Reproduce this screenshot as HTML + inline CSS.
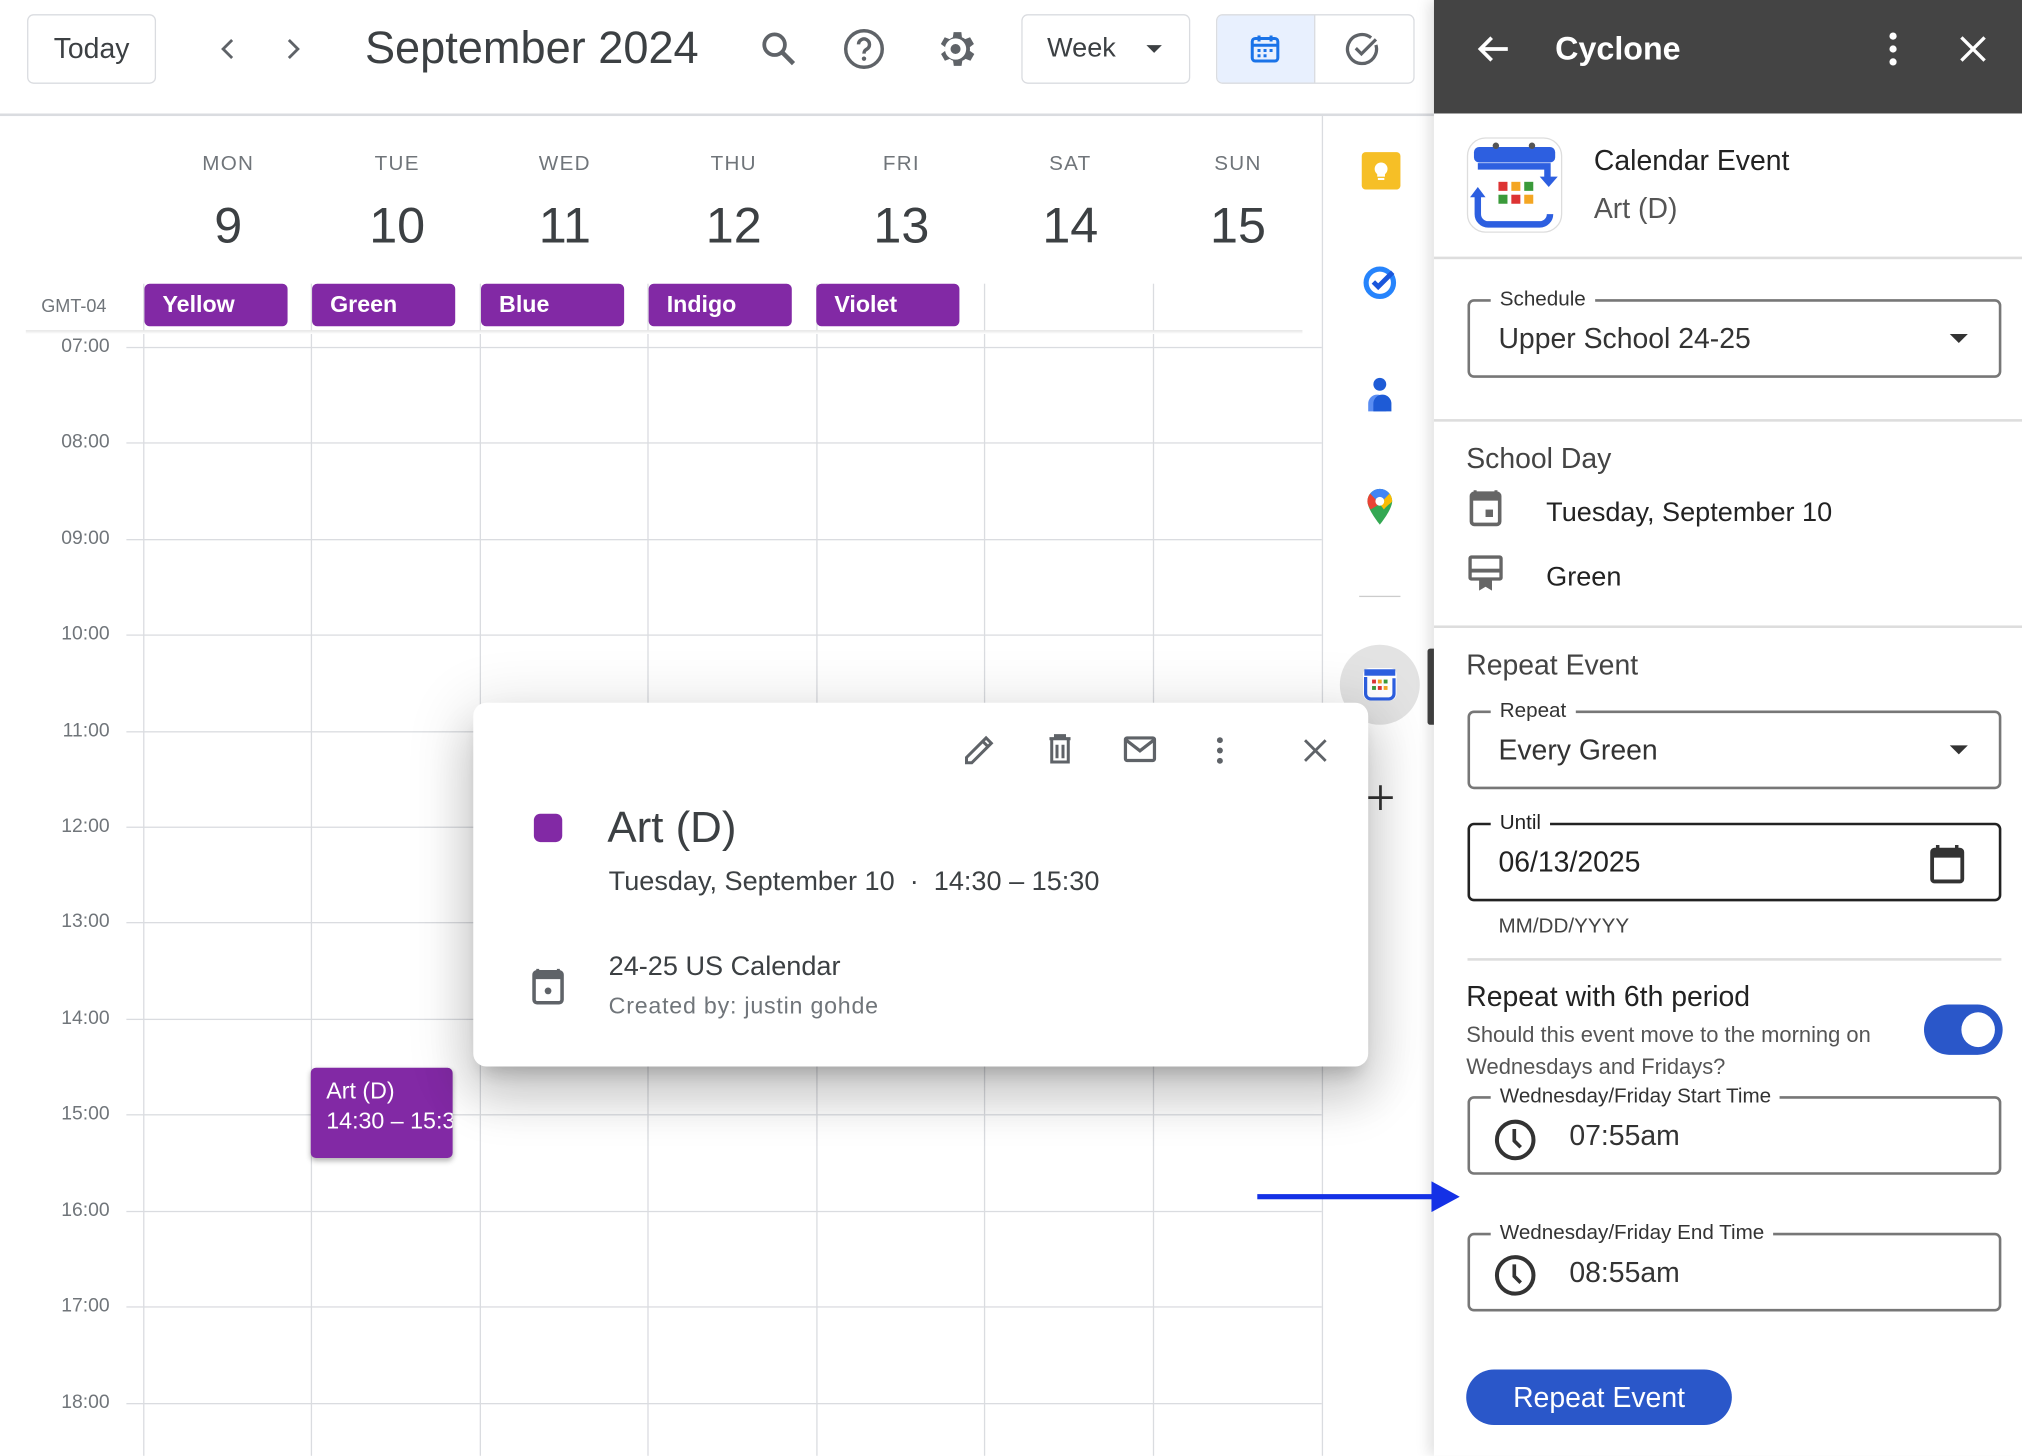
<!DOCTYPE html>
<html><head><meta charset="utf-8">
<style>
*{margin:0;padding:0;box-sizing:border-box}
html,body{width:2022px;height:1456px;overflow:hidden;background:#fff}
#w{position:absolute;left:0;top:0;width:1568px;height:1129px;transform:scale(1.28954);transform-origin:0 0;font-family:"Liberation Sans",Arial,sans-serif;color:#3c4043;overflow:hidden}
.a{position:absolute}
.t{position:absolute;white-space:nowrap}
.hl{position:absolute;left:98px;width:927px;height:1px;background:#dadce0}
.vl{position:absolute;top:220px;width:1px;height:909px;background:#dadce0}
.hr{position:absolute;right:1483px;font-size:15px;color:#70757a;height:20px;line-height:20px;text-align:right;width:70px}
.dn{position:absolute;top:119px;width:100px;text-align:center;font-size:16px;letter-spacing:1px;color:#70757a}
.dd{position:absolute;top:154px;width:100px;text-align:center;font-size:39px;color:#3c4043}
.chip{position:absolute;top:220px;height:33px;width:111px;background:#8229a5;border-radius:4px;color:#fff;font-weight:bold;font-size:18px;line-height:33px;padding-left:14px}
.fld{position:absolute;left:1138px;width:414px;height:61px;border:2px solid #777;border-radius:5px}
.lbl{position:absolute;top:-11px;left:16px;background:#fff;padding:0 7px;font-size:16px;color:#333;line-height:20px}
.val{position:absolute;left:22px;top:16px;font-size:22px;color:#333;line-height:26px}
.div{position:absolute;left:1112px;width:456px;height:2px;background:#ddd}
</style></head><body><div id="w">

<div class="a" style="left:0;top:88px;width:1112px;height:2px;background:#dadce0"></div>
<div class="a" style="left:21px;top:11px;width:100px;height:54px;border:1.5px solid #dadce0;border-radius:5px;font-size:22px;line-height:51px;text-align:center;color:#3c4043">Today</div>
<svg class="a" style="left:165px;top:26px" width="24" height="24" viewBox="0 0 24 24"><path d="M15 5l-7 7 7 7" fill="none" stroke="#5f6368" stroke-width="2.2"/></svg>
<svg class="a" style="left:215px;top:26px" width="24" height="24" viewBox="0 0 24 24"><path d="M9 5l7 7-7 7" fill="none" stroke="#5f6368" stroke-width="2.2"/></svg>
<div class="t" style="left:283px;top:16px;font-size:35px;line-height:44px;color:#3c4043">September 2024</div>
<svg class="a" style="left:588px;top:22px" width="32" height="32" viewBox="0 0 24 24"><circle cx="9.5" cy="9.5" r="6" fill="none" stroke="#5f6368" stroke-width="2.2"/><path d="M14 14l6.5 6.5" stroke="#5f6368" stroke-width="2.6"/></svg>
<svg class="a" style="left:653px;top:21px" width="34" height="34" viewBox="0 0 24 24"><circle cx="12" cy="12" r="10" fill="none" stroke="#5f6368" stroke-width="1.9"/><path d="M9 9.5a3 3 0 1 1 4.5 2.6c-1 .6-1.5 1.1-1.5 2.4" fill="none" stroke="#5f6368" stroke-width="1.9"/><circle cx="12" cy="17.3" r="1.2" fill="#5f6368"/></svg>
<svg class="a" style="left:723px;top:20px" width="36" height="36" viewBox="0 0 24 24"><path fill="#5f6368" d="M19.4 13a7.5 7.5 0 0 0 0-2l2.1-1.6-2-3.5-2.5 1a7 7 0 0 0-1.7-1L15 3.3h-4l-.4 2.6a7 7 0 0 0-1.7 1l-2.5-1-2 3.5L6.6 11a7.5 7.5 0 0 0 0 2l-2.1 1.6 2 3.5 2.5-1a7 7 0 0 0 1.7 1l.4 2.6h4l.4-2.6a7 7 0 0 0 1.7-1l2.5 1 2-3.5zM12 17.5a5.5 5.5 0 1 1 0-11 5.5 5.5 0 0 1 0 11z"/><circle cx="12" cy="12" r="2.6" fill="#5f6368"/></svg>
<div class="a" style="left:792px;top:11px;width:131px;height:54px;border:1.5px solid #dadce0;border-radius:5px"></div>
<div class="t" style="left:812px;top:25px;font-size:21px;line-height:26px">Week</div>
<div class="a" style="left:889px;top:35px;width:0;height:0;border-left:6px solid transparent;border-right:6px solid transparent;border-top:6px solid #3c4043"></div>
<div class="a" style="left:943px;top:11px;width:154px;height:54px;border:1.5px solid #dadce0;border-radius:5px;overflow:hidden"><div class="a" style="left:0;top:0;width:76px;height:54px;background:#e8f0fe;border-right:1.5px solid #dadce0"></div></div>
<svg class="a" style="left:967px;top:24px" width="28" height="28" viewBox="0 0 24 24"><rect x="3.5" y="5" width="17" height="15" rx="2" fill="none" stroke="#1a73e8" stroke-width="2"/><path d="M3.5 9.5h17M8 3v4M16 3v4" stroke="#1a73e8" stroke-width="2"/><g fill="#1a73e8"><rect x="7" y="12" width="2" height="2"/><rect x="11" y="12" width="2" height="2"/><rect x="15" y="12" width="2" height="2"/><rect x="7" y="15.5" width="2" height="2"/><rect x="11" y="15.5" width="2" height="2"/></g></svg>
<svg class="a" style="left:1042px;top:23px" width="30" height="30" viewBox="0 0 24 24"><path d="M20 9.5A9 9 0 1 1 17 5" fill="none" stroke="#5f6368" stroke-width="2"/><path d="M7.5 11.5l3.5 3.5 9-9" fill="none" stroke="#5f6368" stroke-width="2"/></svg>

<div class="dn" style="left:127px">MON</div><div class="dd" style="left:127px">9</div>
<div class="dn" style="left:258px">TUE</div><div class="dd" style="left:258px">10</div>
<div class="dn" style="left:388px">WED</div><div class="dd" style="left:388px">11</div>
<div class="dn" style="left:519px">THU</div><div class="dd" style="left:519px">12</div>
<div class="dn" style="left:649px">FRI</div><div class="dd" style="left:649px">13</div>
<div class="dn" style="left:780px">SAT</div><div class="dd" style="left:780px">14</div>
<div class="dn" style="left:910px">SUN</div><div class="dd" style="left:910px">15</div>

<div class="vl" style="left:111px"></div><div class="vl" style="left:241px"></div><div class="vl" style="left:372px"></div><div class="vl" style="left:502px"></div><div class="vl" style="left:633px"></div><div class="vl" style="left:763px"></div><div class="vl" style="left:894px"></div>
<div class="a" style="left:1025px;top:89px;width:1px;height:1040px;background:#dadce0"></div>
<div class="a" style="left:20px;top:256px;width:990px;height:3px;background:linear-gradient(#e5e5e5,#fff)"></div>
<div class="t" style="left:32px;top:228px;font-size:14px;color:#70757a;line-height:18px">GMT-04</div>
<div class="chip" style="left:112px">Yellow</div>
<div class="chip" style="left:242px">Green</div>
<div class="chip" style="left:373px">Blue</div>
<div class="chip" style="left:503px">Indigo</div>
<div class="chip" style="left:633px">Violet</div>

<div class="hl" style="top:269px"></div><div class="hr" style="top:259px">07:00</div>
<div class="hl" style="top:343px"></div><div class="hr" style="top:333px">08:00</div>
<div class="hl" style="top:418px"></div><div class="hr" style="top:408px">09:00</div>
<div class="hl" style="top:492px"></div><div class="hr" style="top:482px">10:00</div>
<div class="hl" style="top:567px"></div><div class="hr" style="top:557px">11:00</div>
<div class="hl" style="top:641px"></div><div class="hr" style="top:631px">12:00</div>
<div class="hl" style="top:715px"></div><div class="hr" style="top:705px">13:00</div>
<div class="hl" style="top:790px"></div><div class="hr" style="top:780px">14:00</div>
<div class="hl" style="top:864px"></div><div class="hr" style="top:854px">15:00</div>
<div class="hl" style="top:939px"></div><div class="hr" style="top:929px">16:00</div>
<div class="hl" style="top:1013px"></div><div class="hr" style="top:1003px">17:00</div>
<div class="hl" style="top:1088px"></div><div class="hr" style="top:1078px">18:00</div>

<div class="a" style="left:241px;top:828px;width:110px;height:70px;background:#8229a5;border-radius:4px;color:#fff;font-size:18px;line-height:23px;padding:7px 0 0 12px;overflow:hidden;white-space:nowrap;box-shadow:0 2px 4px rgba(0,0,0,.3)">Art (D)<br>14:30 – 15:30</div>

<div class="a" style="left:1056px;top:118px;width:30px;height:29px;background:#f6bf26;border-radius:3px"></div>
<svg class="a" style="left:1059px;top:121px" width="24" height="24" viewBox="0 0 24 24"><circle cx="12" cy="10" r="5" fill="#fff"/><rect x="9" y="13" width="6" height="3" fill="#fff"/><rect x="9.5" y="17" width="5" height="1.6" fill="#fff"/></svg>
<svg class="a" style="left:1055px;top:203px" width="30" height="30" viewBox="0 0 24 24"><circle cx="12" cy="13" r="8.5" fill="none" stroke="#2684fc" stroke-width="3.2"/><path d="M8 12.5l3 3 9-9" fill="none" stroke="#1a56db" stroke-width="3"/></svg>
<svg class="a" style="left:1057px;top:291px" width="26" height="30" viewBox="0 0 26 30"><circle cx="13" cy="7" r="5" fill="#1e5bd6"/><path d="M4 28v-6a7 7 0 0 1 14 0v6z" fill="#5a8df2"/><path d="M8 28v-6a7 7 0 0 1 14 0v6z" fill="#1e5bd6"/></svg>
<svg class="a" style="left:1057px;top:377px" width="26" height="32" viewBox="0 0 24 30"><path d="M12 2a9 9 0 0 0-9 9c0 6 9 17 9 17s9-11 9-17a9 9 0 0 0-9-9z" fill="#34a853"/><path d="M12 2a9 9 0 0 0-7 3.4l7 8 7-8A9 9 0 0 0 12 2z" fill="#4285f4"/><path d="M5 5.4A9 9 0 0 0 3 11c0 2 1 4 2.3 6l6.7-4z" fill="#ea4335"/><path d="M19 5.4l-7 7.6 3 4c2-3 6-5 6-6a9 9 0 0 0-2-5.6z" fill="#fbbc04"/><circle cx="12" cy="11" r="3.2" fill="#fff"/></svg>
<div class="a" style="left:1054px;top:462px;width:32px;height:1px;background:#ccc"></div>
<div class="a" style="left:1039px;top:500px;width:62px;height:62px;border-radius:50%;background:#e3e3e3"></div>
<svg class="a" style="left:1055px;top:515px" width="30" height="30" viewBox="0 0 30 30"><rect x="2" y="3" width="26" height="25" rx="5" fill="#fff"/><rect x="3" y="4" width="24" height="5" fill="#2d5fe0"/><path d="M4 10v13a4 4 0 0 0 4 4h14a4 4 0 0 0 4-4V11" fill="none" stroke="#2d5fe0" stroke-width="2.5"/><g><rect x="9" y="12" width="3" height="3" fill="#d33"/><rect x="13.5" y="12" width="3" height="3" fill="#f4a623"/><rect x="18" y="12" width="3" height="3" fill="#3a9a3a"/><rect x="9" y="17" width="3" height="3" fill="#3a9a3a"/><rect x="13.5" y="17" width="3" height="3" fill="#d33"/><rect x="18" y="17" width="3" height="3" fill="#f4a623"/></g></svg>
<div class="a" style="left:1107px;top:503px;width:5px;height:59px;background:#444;border-radius:2px 0 0 2px"></div>
<svg class="a" style="left:1059px;top:607px" width="23" height="23" viewBox="0 0 24 24"><path d="M12 2v20M2 12h20" stroke="#333" stroke-width="2.2"/></svg>

<div class="a" style="left:367px;top:545px;width:694px;height:282px;background:#fff;border-radius:10px;box-shadow:0 24px 38px 3px rgba(0,0,0,.14),0 9px 46px 8px rgba(0,0,0,.12),0 11px 15px -7px rgba(0,0,0,.2)"></div>
<svg class="a" style="left:746px;top:567px" width="28" height="28" viewBox="0 0 24 24"><path d="M3 21v-3.5L16 4.5l3.5 3.5L6.5 21z M14 7l3.5 3.5" fill="none" stroke="#5f6368" stroke-width="2"/></svg>
<svg class="a" style="left:808px;top:567px" width="28" height="28" viewBox="0 0 24 24"><path d="M5 5h14M9 5V3h6v2M6.5 5.5v15h11v-15M10 9v9M14 9v9" fill="none" stroke="#5f6368" stroke-width="2"/></svg>
<svg class="a" style="left:869px;top:566px" width="30" height="30" viewBox="0 0 24 24"><rect x="3" y="5" width="18" height="14" rx="1" fill="none" stroke="#5f6368" stroke-width="2"/><path d="M3 6l9 7 9-7" fill="none" stroke="#5f6368" stroke-width="2"/></svg>
<svg class="a" style="left:934px;top:569px" width="24" height="26" viewBox="0 0 24 26"><circle cx="12" cy="5" r="2.3" fill="#5f6368"/><circle cx="12" cy="13" r="2.3" fill="#5f6368"/><circle cx="12" cy="21" r="2.3" fill="#5f6368"/></svg>
<svg class="a" style="left:1008px;top:570px" width="24" height="24" viewBox="0 0 24 24"><path d="M4 4l16 16M20 4L4 20" stroke="#5f6368" stroke-width="2.2"/></svg>
<div class="a" style="left:414px;top:631px;width:22px;height:22px;background:#8229a5;border-radius:5px"></div>
<div class="t" style="left:471px;top:621px;font-size:34px;line-height:42px;color:#3c4043">Art (D)</div>
<div class="t" style="left:472px;top:671px;font-size:21px;line-height:26px;color:#3c4043">Tuesday, September 10 &nbsp;·&nbsp; 14:30 – 15:30</div>
<svg class="a" style="left:411px;top:749px" width="28" height="32" viewBox="0 0 24 28"><path d="M5 2v3M19 2v3" stroke="#5f6368" stroke-width="2"/><rect x="2.5" y="4" width="19" height="21" rx="2" fill="none" stroke="#5f6368" stroke-width="2.4"/><rect x="2.5" y="4" width="19" height="5" fill="#5f6368"/><circle cx="12" cy="17" r="2.3" fill="#5f6368"/></svg>
<div class="t" style="left:472px;top:737px;font-size:21px;line-height:26px;color:#3c4043">24-25 US Calendar</div>
<div class="t" style="left:472px;top:769px;font-size:18px;line-height:22px;color:#70757a;letter-spacing:.6px">Created by: justin gohde</div>

<div class="a" style="left:1112px;top:0;width:456px;height:1129px;background:#fff;box-shadow:-4px 0 10px rgba(0,0,0,.12)"></div>
<div class="a" style="left:1112px;top:0;width:456px;height:88px;background:#444"></div>
<svg class="a" style="left:1143px;top:23px" width="30" height="30" viewBox="0 0 24 24"><path d="M21 12H4M11 5l-7 7 7 7" fill="none" stroke="#fff" stroke-width="2.3"/></svg>
<div class="t" style="left:1206px;top:23px;font-size:25px;line-height:30px;font-weight:bold;color:#fff">Cyclone</div>
<svg class="a" style="left:1458px;top:24px" width="20" height="28" viewBox="0 0 20 28"><circle cx="10" cy="4" r="2.8" fill="#fff"/><circle cx="10" cy="14" r="2.8" fill="#fff"/><circle cx="10" cy="24" r="2.8" fill="#fff"/></svg>
<svg class="a" style="left:1518px;top:26px" width="24" height="24" viewBox="0 0 24 24"><path d="M3 3l18 18M21 3L3 21" stroke="#fff" stroke-width="2.6"/></svg>

<svg class="a" style="left:1137px;top:106px" width="75" height="75" viewBox="0 0 75 75"><rect x="1" y="1" width="73" height="73" rx="14" fill="#fff" stroke="#ddd"/><rect x="6" y="8" width="63" height="12" rx="4" fill="#2d5fe0"/><circle cx="23" cy="7" r="2.5" fill="#555"/><circle cx="51" cy="7" r="2.5" fill="#555"/><path d="M9 23h54v10M65 60a8 8 0 0 1-8 8H17a8 8 0 0 1-8-8V45" fill="none" stroke="#2d5fe0" stroke-width="5"/><path d="M57 31l7 8 7-8z" fill="#2d5fe0"/><path d="M3 47l6-8 6 8z" fill="#2d5fe0"/><g><rect x="25" y="35" width="7" height="7" fill="#d33"/><rect x="35" y="35" width="7" height="7" fill="#f4a623"/><rect x="45" y="35" width="7" height="7" fill="#3a9a3a"/><rect x="25" y="45" width="7" height="7" fill="#3a9a3a"/><rect x="35" y="45" width="7" height="7" fill="#d33"/><rect x="45" y="45" width="7" height="7" fill="#f4a623"/></g></svg>
<div class="t" style="left:1236px;top:112px;font-size:22px;line-height:26px;color:#222">Calendar Event</div>
<div class="t" style="left:1236px;top:149px;font-size:22px;line-height:26px;color:#555">Art (D)</div>
<div class="div" style="top:199px"></div>

<div class="fld" style="top:232px"><div class="lbl">Schedule</div><div class="val">Upper School 24-25</div><div class="a" style="left:372px;top:25px;border-left:7px solid transparent;border-right:7px solid transparent;border-top:7px solid #333"></div></div>
<div class="div" style="top:325px"></div>

<div class="t" style="left:1137px;top:343px;font-size:22px;line-height:26px;color:#444">School Day</div>
<svg class="a" style="left:1138px;top:379px" width="28" height="30" viewBox="0 0 24 26"><path d="M5 1v3M19 1v3" stroke="#666" stroke-width="2"/><rect x="2.5" y="3" width="19" height="21" rx="2" fill="none" stroke="#666" stroke-width="2.4"/><rect x="2.5" y="3" width="19" height="5" fill="#666"/><rect x="12" y="14" width="5" height="5" fill="#666"/></svg>
<div class="t" style="left:1199px;top:385px;font-size:21px;line-height:26px;color:#222">Tuesday, September 10</div>
<svg class="a" style="left:1138px;top:430px" width="28" height="30" viewBox="0 0 28 30"><rect x="2" y="2" width="24" height="17" rx="1" fill="none" stroke="#666" stroke-width="2.6"/><rect x="2" y="11" width="24" height="3" fill="#666"/><path d="M9 20v8l5-3 5 3v-8z" fill="#666"/></svg>
<div class="t" style="left:1199px;top:435px;font-size:21px;line-height:26px;color:#222">Green</div>
<div class="div" style="top:485px"></div>

<div class="t" style="left:1137px;top:503px;font-size:22px;line-height:26px;color:#444">Repeat Event</div>
<div class="fld" style="top:551px"><div class="lbl">Repeat</div><div class="val">Every Green</div><div class="a" style="left:372px;top:25px;border-left:7px solid transparent;border-right:7px solid transparent;border-top:7px solid #333"></div></div>
<div class="fld" style="top:638px;border-color:#222"><div class="lbl" style="color:#222">Until</div><div class="val" style="color:#222">06/13/2025</div>
<svg class="a" style="left:355px;top:14px" width="30" height="32" viewBox="0 0 24 26"><path d="M6 1v4M18 1v4" stroke="#333" stroke-width="2.2"/><rect x="2.5" y="4" width="19" height="20" rx="1.5" fill="none" stroke="#333" stroke-width="2.4"/><rect x="2.5" y="4" width="19" height="5" fill="#333"/></svg></div>
<div class="t" style="left:1162px;top:709px;font-size:16px;line-height:20px;color:#444">MM/DD/YYYY</div>
<div class="a" style="left:1138px;top:743px;width:414px;height:2px;background:#ddd"></div>

<div class="t" style="left:1137px;top:760px;font-size:22px;line-height:26px;color:#222">Repeat with 6th period</div>
<div class="t" style="left:1137px;top:790px;font-size:17px;line-height:25px;color:#555">Should this event move to the morning on<br>Wednesdays and Fridays?</div>
<div class="a" style="left:1492px;top:779px;width:61px;height:39px;border-radius:20px;background:#2a57c9"></div>
<div class="a" style="left:1521px;top:785px;width:26px;height:27px;border-radius:50%;background:#fff"></div>

<div class="fld" style="top:850px"><div class="lbl">Wednesday/Friday Start Time</div>
<svg class="a" style="left:18px;top:15px" width="34" height="34" viewBox="0 0 24 24"><circle cx="12" cy="12" r="10" fill="none" stroke="#333" stroke-width="2.2"/><path d="M11.5 6v6.5l3.5 3.5" fill="none" stroke="#333" stroke-width="2"/></svg>
<div class="val" style="left:77px">07:55am</div></div>
<div class="fld" style="top:956px"><div class="lbl">Wednesday/Friday End Time</div>
<svg class="a" style="left:18px;top:14px" width="34" height="34" viewBox="0 0 24 24"><circle cx="12" cy="12" r="10" fill="none" stroke="#333" stroke-width="2.2"/><path d="M11.5 6v6.5l3.5 3.5" fill="none" stroke="#333" stroke-width="2"/></svg>
<div class="val" style="left:77px">08:55am</div></div>

<div class="a" style="left:1137px;top:1062px;width:206px;height:43px;border-radius:22px;background:#2a57c9;color:#fff;font-size:22px;line-height:43px;text-align:center">Repeat Event</div>

<div class="a" style="left:975px;top:926px;width:140px;height:4px;background:#1431e6"></div>
<svg class="a" style="left:1110px;top:916px" width="22" height="24" viewBox="0 0 22 24"><path d="M0 0l22 12L0 24z" fill="#1431e6"/></svg>

</div></body></html>
